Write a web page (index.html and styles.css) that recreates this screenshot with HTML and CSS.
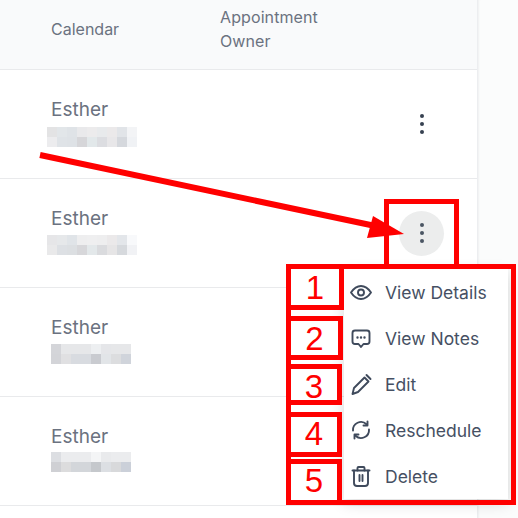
FILE: index.html
```html
<!DOCTYPE html>
<html>
<head>
  <title>Appointments</title>
  <link rel="stylesheet" href="styles.css">
</head>
<body>
  <div class="page">
    <div class="panel">
      <div class="row head-row">
        <div class="col-calendar">Calendar</div>
        <div class="col-owner">Appointment<br>Owner</div>
      </div>

      <div class="row">
        <div class="col-calendar">
          <div class="name">Esther</div>
          <svg class="blur wide gap-7" width="90" height="20" shape-rendering="crispEdges">
            <rect x="0" y="0" width="10" height="10" fill="#e3e3e4"/><rect x="10" y="0" width="10" height="10" fill="#e2e6e9"/><rect x="20" y="0" width="10" height="10" fill="#dfe3e7"/><rect x="30" y="0" width="10" height="10" fill="#e9e9eb"/><rect x="40" y="0" width="10" height="10" fill="#ecebec"/><rect x="50" y="0" width="10" height="10" fill="#e8eaec"/><rect x="60" y="0" width="10" height="10" fill="#ebe9ea"/><rect x="70" y="0" width="10" height="10" fill="#e1e4e8"/><rect x="80" y="0" width="10" height="10" fill="#f3f4f6"/>
            <rect x="0" y="10" width="10" height="10" fill="#ececee"/><rect x="10" y="10" width="10" height="10" fill="#dfe3e7"/><rect x="20" y="10" width="10" height="10" fill="#dee2e6"/><rect x="30" y="10" width="10" height="10" fill="#d6d6d9"/><rect x="40" y="10" width="10" height="10" fill="#e2e8ea"/><rect x="50" y="10" width="10" height="10" fill="#dcdde1"/><rect x="60" y="10" width="10" height="10" fill="#e8e7e9"/><rect x="70" y="10" width="10" height="10" fill="#d5d8dd"/><rect x="80" y="10" width="10" height="10" fill="#f0f2f5"/>
          </svg>
        </div>
        <button class="kebab">
          <svg width="6" height="22" viewBox="0 0 6 22"><circle cx="3" cy="3" r="2"/><circle cx="3" cy="11" r="2"/><circle cx="3" cy="19" r="2"/></svg>
        </button>
      </div>

      <div class="row">
        <div class="col-calendar">
          <div class="name">Esther</div>
          <svg class="blur wide" width="90" height="20" shape-rendering="crispEdges">
            <rect x="0" y="0" width="10" height="10" fill="#e6e6e8"/><rect x="10" y="0" width="10" height="10" fill="#e6e8ea"/><rect x="20" y="0" width="10" height="10" fill="#e0e4e8"/><rect x="30" y="0" width="10" height="10" fill="#eeeeef"/><rect x="40" y="0" width="10" height="10" fill="#efeff0"/><rect x="50" y="0" width="10" height="10" fill="#eeeeef"/><rect x="60" y="0" width="10" height="10" fill="#ebe9ea"/><rect x="70" y="0" width="10" height="10" fill="#e3e6ea"/><rect x="80" y="0" width="10" height="10" fill="#f8f9fb"/>
            <rect x="0" y="10" width="10" height="10" fill="#e9e9ea"/><rect x="10" y="10" width="10" height="10" fill="#dde0e4"/><rect x="20" y="10" width="10" height="10" fill="#dcdfe2"/><rect x="30" y="10" width="10" height="10" fill="#d7d7da"/><rect x="40" y="10" width="10" height="10" fill="#e3e8ea"/><rect x="50" y="10" width="10" height="10" fill="#dadbde"/><rect x="60" y="10" width="10" height="10" fill="#e6e5e6"/><rect x="70" y="10" width="10" height="10" fill="#d6d9dd"/><rect x="80" y="10" width="10" height="10" fill="#f1f2f5"/>
          </svg>
        </div>
        <button class="kebab kebab-open">
          <svg width="6" height="22" viewBox="0 0 6 22"><circle cx="3" cy="3" r="2"/><circle cx="3" cy="11" r="2"/><circle cx="3" cy="19" r="2"/></svg>
        </button>
      </div>

      <div class="row">
        <div class="col-calendar">
          <div class="name">Esther</div>
          <svg class="blur" width="80" height="20" shape-rendering="crispEdges">
            <rect x="0" y="0" width="10" height="10" fill="#d4d5d9"/><rect x="10" y="0" width="10" height="10" fill="#e6e7e9"/><rect x="20" y="0" width="10" height="10" fill="#e6e7e9"/><rect x="30" y="0" width="10" height="10" fill="#e6e7e9"/><rect x="40" y="0" width="10" height="10" fill="#edeff1"/><rect x="50" y="0" width="10" height="10" fill="#e5e6e9"/><rect x="60" y="0" width="10" height="10" fill="#e6e7e9"/><rect x="70" y="0" width="10" height="10" fill="#e6e7e9"/>
            <rect x="0" y="10" width="10" height="10" fill="#d3d4d8"/><rect x="10" y="10" width="10" height="10" fill="#e0e0e2"/><rect x="20" y="10" width="10" height="10" fill="#d8dbe0"/><rect x="30" y="10" width="10" height="10" fill="#d8dbe0"/><rect x="40" y="10" width="10" height="10" fill="#c9cbd0"/><rect x="50" y="10" width="10" height="10" fill="#e2e5e8"/><rect x="60" y="10" width="10" height="10" fill="#dcdddf"/><rect x="70" y="10" width="10" height="10" fill="#d0d4db"/>
          </svg>
        </div>
      </div>

      <div class="row">
        <div class="col-calendar">
          <div class="name">Esther</div>
          <svg class="blur gap-5" width="80" height="20" shape-rendering="crispEdges">
            <rect x="0" y="0" width="10" height="10" fill="#dcdee2"/><rect x="10" y="0" width="10" height="10" fill="#ebecee"/><rect x="20" y="0" width="10" height="10" fill="#ebecee"/><rect x="30" y="0" width="10" height="10" fill="#ebecee"/><rect x="40" y="0" width="10" height="10" fill="#f4f5f6"/><rect x="50" y="0" width="10" height="10" fill="#e9eaec"/><rect x="60" y="0" width="10" height="10" fill="#ebecee"/><rect x="70" y="0" width="10" height="10" fill="#ebecee"/>
            <rect x="0" y="10" width="10" height="10" fill="#cfd0d4"/><rect x="10" y="10" width="10" height="10" fill="#dcdcdd"/><rect x="20" y="10" width="10" height="10" fill="#d3d6da"/><rect x="30" y="10" width="10" height="10" fill="#d3d6da"/><rect x="40" y="10" width="10" height="10" fill="#c5c8cc"/><rect x="50" y="10" width="10" height="10" fill="#dcdfe3"/><rect x="60" y="10" width="10" height="10" fill="#d8d9db"/><rect x="70" y="10" width="10" height="10" fill="#cbd0d9"/>
          </svg>
        </div>
      </div>
    </div>
    <div class="side"></div>
  </div>

  <div class="menu">
    <div class="menu-item">
      <svg class="icon" viewBox="0 0 24 24"><path d="M2 12.500C5 8 8.500 6 12 6s7 2 10 6.500c-3 4.500-6.500 6.500-10 6.500s-7-2-10-6.500z"/><circle cx="12" cy="12.500" r="3"/></svg>
      View Details
    </div>
    <div class="menu-item">
      <svg class="icon" viewBox="0 0 24 24"><path d="M6 4.500h12A2.500 2.500 0 0 1 20.500 7v8.500a2.500 2.500 0 0 1-2.500 2.500h-3.500L12 21l-2.500-3H6a2.500 2.500 0 0 1-2.500-2.500V7A2.500 2.500 0 0 1 6 4.500z"/><path class="dots" d="M8.500 11.500h.01M12 11.500h.01M15.500 11.500h.01"/></svg>
      View Notes
    </div>
    <div class="menu-item">
      <svg class="icon" viewBox="0 0 24 24"><path d="M3.500 22l1.500-6L15.500 5.500l4 4L9 20z"/><path d="M17.500 3l4 4"/></svg>
      Edit
    </div>
    <div class="menu-item">
      <svg class="icon" viewBox="0 0 24 24"><path d="M4 12.500A8 8 0 0 1 17.500 6.200"/><path d="M18.500 3.500v4h-4"/><path d="M20 11.500A8 8 0 0 1 6.500 17.800"/><path d="M5.500 20.500v-4h4"/></svg>
      Reschedule
    </div>
    <div class="menu-item">
      <svg class="icon" viewBox="0 0 24 24"><path d="M3.500 6.500h17"/><path d="M8.500 6.500V4a1 1 0 0 1 1-1h5a1 1 0 0 1 1 1v2.500"/><path d="M5 6.500V19a3 3 0 0 0 3 3h8a3 3 0 0 0 3-3V6.500"/><path d="M10.500 11v6M13.500 11v6"/></svg>
      Delete
    </div>
  </div>

  <!-- red annotations drawn on top of the screenshot -->
  <div class="mark mark-kebab"></div>
  <div class="mark mark-menu"></div>
  <div class="mark num num-1">1</div>
  <div class="mark num num-2">2</div>
  <div class="mark num num-3">3</div>
  <div class="mark num num-4">4</div>
  <div class="mark num num-5">5</div>
  <svg class="arrow" width="518" height="518" viewBox="0 0 518 518">
    <path d="M40 155L380 227" stroke="#ff0000" stroke-width="6" fill="none"/>
    <path d="M404 234L373 216L367 238z" fill="#ff0000"/>
  </svg>
</body>
</html>
```

FILE: styles.css
```css
html, body {
  margin: 0;
  height: 100%;
  overflow: hidden;
}

body {
  font-family: Inter, "Liberation Sans", sans-serif;
  color: #6b7280;
  background-color: #fff;
}

.page {
  display: flex;
  height: 518px;
}

.panel {
  width: 477px;
  flex-shrink: 0;
  border-right: 1px solid #eceef0;
  background-color: #fff;
}

.side {
  flex: 1;
  background-color: #fbfcfc;
  box-shadow: inset 2px 0 2px -1px #f0f1f2;
}

.row {
  display: flex;
  align-items: center;
  height: 108px;
  padding-left: 51px;
  border-bottom: 1px solid #e9eaec;
  position: relative;
}

.head-row {
  box-sizing: border-box;
  height: 70px;
  padding-bottom: 12px;
  font-size: 16px;
  line-height: 24px;
  background-color: #f9fafb;
}

.col-calendar {
  width: 169px;
  align-self: flex-start;
  padding-top: 29px;
}

.head-row .col-calendar {
  align-self: center;
  padding-top: 0;
}

.col-owner {
  width: 150px;
  letter-spacing: 0.1px;
}

.name {
  font-size: 19px;
  line-height: 22px;
}

.blur {
  display: block;
  margin-top: 5px;
}

.blur.wide {
  margin-left: -4px;
}

.blur.gap-7 {
  margin-top: 6px;
}

.blur.gap-5 {
  margin-top: 4px;
}

.kebab {
  width: 45px;
  height: 45px;
  margin-left: 179px;
  padding: 0;
  border: none;
  border-radius: 50%;
  background: none;
  display: flex;
  align-items: center;
  justify-content: center;
}

.kebab svg {
  fill: #374151;
}

.kebab-open {
  background-color: #eceded;
}

.kebab-open svg {
  fill: #4b5563;
}

.menu {
  position: absolute;
  left: 344px;
  top: 269px;
  width: 164px;
  background-color: #fff;
  box-shadow: 0 4px 14px rgba(0, 0, 0, 0.16);
  color: #465063;
  font-size: 17.500px;
}

.menu-item {
  display: flex;
  align-items: center;
  height: 46px;
  padding-left: 5px;
  gap: 12px;
}

.icon {
  width: 24px;
  height: 24px;
  fill: none;
  stroke: #3f4a5c;
  stroke-width: 1.900;
  stroke-linecap: round;
  stroke-linejoin: round;
}

.icon .dots {
  stroke-width: 2.400;
}

.mark {
  position: absolute;
  box-sizing: border-box;
  border: 5px solid #ff0000;
}

.mark-kebab {
  left: 384px;
  top: 199px;
  width: 75px;
  height: 70px;
}

.mark-menu {
  left: 286px;
  top: 264px;
  width: 230px;
  height: 241px;
}

.num {
  left: 286px;
  width: 58px;
  background-color: #fff;
  color: #ff0000;
  font-family: "Liberation Sans", Arial, sans-serif;
  font-size: 33px;
  line-height: 1;
  display: flex;
  align-items: center;
  justify-content: center;
}

.num-1 { top: 264px; height: 46px; }
.num-2 { top: 316px; height: 44px; width: 57px; }
.num-3 { top: 364px; height: 41px; width: 56px; padding-top: 4px; }
.num-4 { top: 412px; height: 45px; width: 56px; padding-bottom: 2px; }
.num-5 { top: 459px; height: 46px; width: 56px; padding-bottom: 3px; }

.arrow {
  position: absolute;
  left: 0;
  top: 0;
}
```
